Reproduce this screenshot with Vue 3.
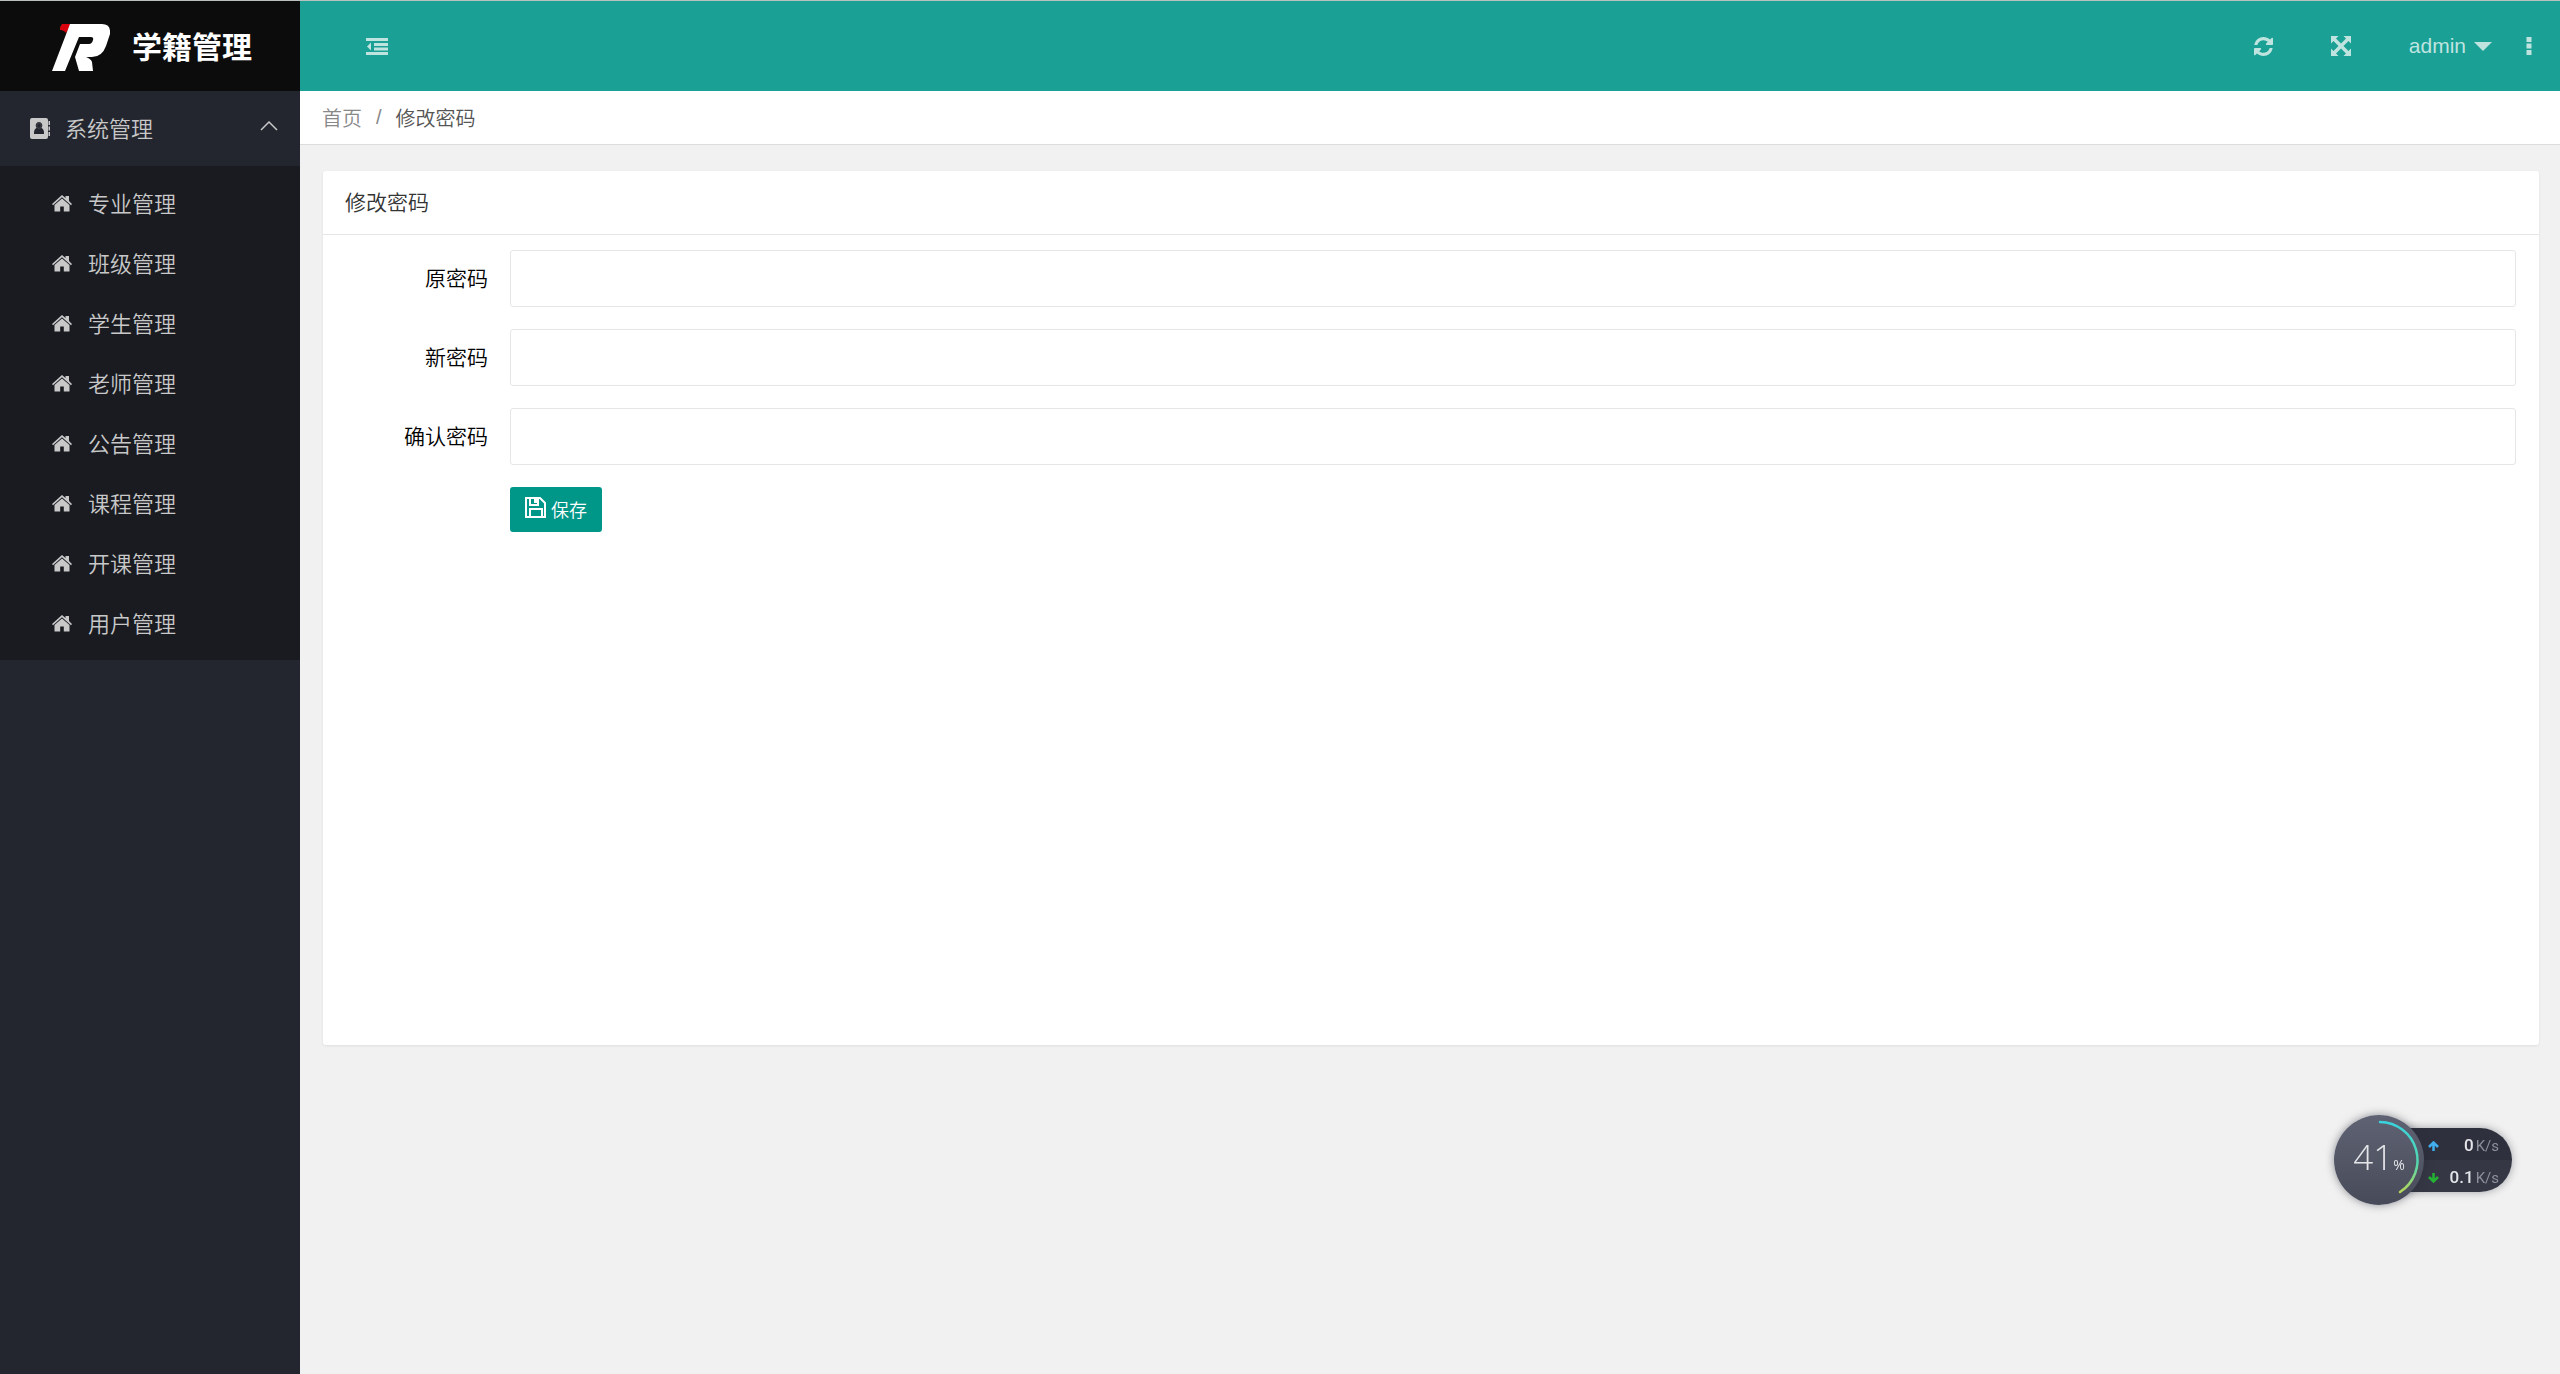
<script setup>
import { ref } from 'vue'

const menu = ['专业管理', '班级管理', '学生管理', '老师管理', '公告管理', '课程管理', '开课管理', '用户管理']
const fields = [
  { id: 'old-password', label: '原密码' },
  { id: 'new-password', label: '新密码' },
  { id: 'confirm-password', label: '确认密码' },
]
const form = ref({})
</script>

<template>
  <div class="layout">
    <aside class="sidebar">
      <div class="brand">
        <svg class="logo" width="58" height="48" viewBox="0 0 58 48" aria-hidden="true">
          <path fill="#d9000d" d="M10 0H19L14 9Q12 6 8 6Q8 2 10 0Z" />
          <path fill="#fff" fill-rule="evenodd" d="M18 0H50Q59 0 58 10L54 22Q50 33 40 33H34Q39 35 40 38L41 47H27L23 33L28 20H37Q40 20 41 16Q42 13 39 13H27L13 47H0Z" />
        </svg>
        <h1>学籍管理</h1>
      </div>
      <nav>
        <button class="group" type="button" aria-expanded="true">
          <svg width="20" height="21" viewBox="0 0 20 21" aria-hidden="true">
            <path fill="currentColor" fill-rule="evenodd" d="M2 0H16Q18 0 18 2V19Q18 21 16 21H2Q0 21 0 19V2Q0 0 2 0ZM9 4A3.300 3.600 0 0 0 6.500 10Q4 11 4 15V16H14V15Q14 11 11.500 10A3.300 3.600 0 0 0 9 4Z" />
            <path fill="none" stroke="currentColor" stroke-width="1.200" d="M9 5.200A2.200 2.600 0 0 1 9 10.400A2.200 2.600 0 0 1 9 5.200" opacity="0.150" />
            <path fill="currentColor" d="M18.500 3H20V7H18.500ZM18.500 8.500H20V12.500H18.500ZM18.500 14H20V18H18.500Z" />
          </svg>
          <span>系统管理</span>
          <svg class="chevron" width="18" height="10" viewBox="0 0 18 10" aria-hidden="true">
            <path d="M1 9L9 1L17 9" fill="none" stroke="currentColor" stroke-width="1.500" />
          </svg>
        </button>
        <ul class="submenu">
          <li v-for="item in menu" :key="item">
            <a href="#">
              <svg width="20" height="17" viewBox="0 0 20 17" aria-hidden="true">
                <path fill="currentColor" d="M10 0L13.500 3V1H17V6L20 9L19 10.200L10 2.300L1 10.200L0 9Z" />
                <path fill="currentColor" d="M10 3.500L17.500 10V16.500H11.800V11.500H8.200V16.500H2.500V10Z" />
              </svg>
              <span>{{ item }}</span>
            </a>
          </li>
        </ul>
      </nav>
    </aside>

    <div class="main">
      <header class="topbar">
        <button type="button" aria-label="收起菜单">
          <svg width="22" height="17" viewBox="0 0 22 17" aria-hidden="true">
            <path fill="currentColor" d="M0 0H22V3H0ZM8 5H22V8H8ZM8 9.500H22V12.500H8ZM0 14H22V17H0ZM5 4.500V12.500L1 8.500Z" />
          </svg>
        </button>
        <div class="tools">
          <button type="button" aria-label="刷新">
            <svg width="19" height="19" viewBox="0 0 1536 1536" aria-hidden="true">
              <path fill="currentColor" d="M1511 928q0 5-1 7-64 268-268 434.500T764 1536q-146 0-282.500-55T238 1324l-129 129q-19 19-45 19t-45-19-19-45V960q0-26 19-45t45-19h448q26 0 45 19t19 45-19 45l-137 137q71 66 161 102t187 36q134 0 250-65t186-179q11-17 53-117 8-23 30-23h192q13 0 22.500 9.500t9.500 22.500zm25-800v448q0 26-19 45t-45 19h-448q-26 0-45-19t-19-45 19-45l138-138Q969 256 768 256q-134 0-250 65T332 500q-11 17-53 117-8 23-30 23H50q-13 0-22.500-9.500T18 608v-7q65-268 270-434.500T768 0q146 0 284 55.500T1297 212l130-129q19-19 45-19t45 19 19 45z" />
            </svg>
          </button>
          <button type="button" aria-label="全屏">
            <svg width="20" height="20" viewBox="0 0 20 20" aria-hidden="true">
              <path fill="currentColor" d="M0 0H7.500L5 2.500L10 7.500L15 2.500L12.500 0H20V7.500L17.500 5L12.500 10L17.500 15L20 12.500V20H12.500L15 17.500L10 12.500L5 17.500L7.500 20H0V12.500L2.500 15L7.500 10L2.500 5L0 7.500Z" />
            </svg>
          </button>
          <button type="button" class="user">
            <span>admin</span>
            <svg width="18" height="9" viewBox="0 0 18 9" aria-hidden="true"><path fill="currentColor" d="M0 0H18L9 9Z" /></svg>
          </button>
          <button type="button" class="more" aria-label="更多">
            <svg width="6" height="18" viewBox="0 0 6 18" aria-hidden="true">
              <path fill="currentColor" d="M0.500 0H5.500V5H0.500ZM0.500 6.500H5.500V11.500H0.500ZM0.500 13H5.500V18H0.500Z" />
            </svg>
          </button>
        </div>
      </header>

      <nav class="breadcrumb" aria-label="位置">
        <a href="#">首页</a><span class="slash">/</span><span>修改密码</span>
      </nav>

      <main class="content">
        <section class="card">
          <h2>修改密码</h2>
          <form @submit.prevent>
            <div v-for="field in fields" :key="field.id" class="row">
              <label :for="field.id">{{ field.label }}</label>
              <input :id="field.id" v-model="form[field.id]" type="password" />
            </div>
            <button class="save" type="submit">
              <svg width="21" height="21" viewBox="0 0 21 21" aria-hidden="true">
                <path fill="none" stroke="currentColor" stroke-width="2" d="M1 1H15L20 6V20H1ZM5 20V12H17V20M5 1V8H13V1" />
                <path fill="currentColor" d="M9 2H12V6H9Z" />
              </svg>
              <span>保存</span>
            </button>
          </form>
        </section>
      </main>
    </div>

    <div class="monitor">
      <div class="gauge">
        <svg class="arc" width="90" height="90" viewBox="0 0 90 90" aria-hidden="true">
          <defs>
            <linearGradient id="arc" x1="0" y1="0" x2="0" y2="1">
              <stop offset="0" stop-color="#38d3dc" />
              <stop offset="0.600" stop-color="#55d6ac" />
              <stop offset="1" stop-color="#b5d65a" />
            </linearGradient>
          </defs>
          <path d="M46 7A38 38 0 0 1 66 77" fill="none" stroke="url(#arc)" stroke-width="2.500" stroke-linecap="round" />
        </svg>
        <span class="load">41</span><span class="percent">%</span>
      </div>
      <div class="speeds">
        <div class="speed">
          <svg class="up" width="11" height="10" viewBox="0 0 11 10" aria-hidden="true"><path d="M5.500 10V2M1 6L5.500 1.500L10 6" /></svg>
          <b>0</b><span>K/s</span>
        </div>
        <div class="speed">
          <svg class="down" width="11" height="10" viewBox="0 0 11 10" aria-hidden="true"><path d="M5.500 0V8M1 4L5.500 8.500L10 4" /></svg>
          <b>0.1</b><span>K/s</span>
        </div>
      </div>
    </div>
  </div>
</template>

<style>
body {
  background: #f1f1f1;
}
</style>

<style scoped>
.layout {
  display: flex;
  box-sizing: border-box;
  min-height: 100vh;
  border-top: 1px solid #b9c0c0;
  font-family: "Liberation Sans", "Noto Sans CJK SC", sans-serif;
  font-weight: 350;
}
button {
  padding: 0;
  border: 0;
  background: none;
  color: inherit;
  font: inherit;
  cursor: pointer;
}
a {
  color: inherit;
  text-decoration: none;
}
svg {
  flex: none;
  display: block;
}
.sidebar {
  flex: none;
  width: 300px;
  background: #23262e;
  color: #c8c8c9;
}
.brand {
  display: flex;
  align-items: center;
  gap: 22px;
  box-sizing: border-box;
  height: 90px;
  padding: 3px 0 0 52px;
  background: #0c0c0c;
}
.brand h1 {
  margin: 0;
  color: #fff;
  font-size: 30px;
  line-height: 44px;
  font-weight: 700;
}
.group {
  display: flex;
  align-items: center;
  width: 100%;
  height: 75px;
  padding: 0 22px 0 30px;
  font-size: 22px;
  gap: 15px;
}
.group span {
  padding-bottom: 4px;
}
.chevron {
  margin: 0 0 6px auto;
}
.submenu {
  margin: 0;
  padding: 7px 0;
  list-style: none;
  background: #191b20;
}
.submenu a {
  display: flex;
  align-items: center;
  gap: 16px;
  height: 60px;
  padding-left: 52px;
  font-size: 22px;
}
.submenu span {
  padding-bottom: 3px;
}
.main {
  flex: 1;
  min-width: 0;
}
.topbar {
  display: flex;
  align-items: center;
  justify-content: space-between;
  height: 90px;
  padding: 0 28px 0 66px;
  background: #1aa094;
  color: #bfe4e0;
}
.tools {
  display: flex;
  align-items: center;
  gap: 58px;
}
.user {
  display: flex;
  align-items: center;
  gap: 8px;
  font-size: 21px;
}
.more {
  margin-left: -24px;
}
.breadcrumb {
  display: flex;
  align-items: center;
  height: 53px;
  padding-left: 22px;
  border-bottom: 1px solid #dcdcdc;
  background: #fff;
  color: #555;
  font-size: 20px;
}
.breadcrumb a,
.slash {
  color: #888;
}
.slash {
  margin: 0 14px;
}
.content {
  padding: 26px 21px 24px 23px;
}
.card {
  min-height: 874px;
  border-radius: 3px;
  background: #fff;
  box-shadow: 0 1px 3px rgba(0, 0, 0, 0.08);
}
.card h2 {
  margin: 0;
  padding: 0 22px;
  border-bottom: 1px solid #e6e6e6;
  color: #333;
  font-size: 21px;
  line-height: 63px;
  font-weight: 350;
}
form {
  padding: 15px 23px 24px 0;
}
.row {
  display: flex;
  align-items: center;
  margin-bottom: 22px;
}
.row label {
  flex: none;
  width: 165px;
  margin-right: 22px;
  padding-bottom: 4px;
  color: #000;
  font-size: 21px;
  text-align: right;
}
.row input {
  flex: 1;
  min-width: 0;
  box-sizing: border-box;
  height: 57px;
  padding: 0 15px;
  border: 1px solid #e6e6e6;
  border-radius: 3px;
  background: #fff;
  font-size: 21px;
}
.save {
  display: flex;
  align-items: center;
  gap: 5px;
  height: 45px;
  margin-left: 187px;
  padding: 0 15px;
  border-radius: 3px;
  background: #009688;
  color: #fff;
  font-size: 18px;
}
.save svg {
  margin-bottom: 5px;
}
.save span {
  padding-bottom: 2px;
}
.monitor {
  position: fixed;
  right: 48px;
  bottom: 169px;
  display: flex;
  align-items: center;
  color: #e4e5e9;
}
.gauge {
  z-index: 1;
  display: flex;
  align-items: baseline;
  justify-content: center;
  box-sizing: border-box;
  width: 90px;
  height: 90px;
  border-radius: 50%;
  background: linear-gradient(#5e6272, #474b59);
  box-shadow: 0 0 8px rgba(40, 42, 55, 0.5);
  font-family: "Open Sans", sans-serif;
  font-weight: 300;
  line-height: 84px;
}
.arc {
  position: absolute;
  left: 0;
  top: 0;
}
.load {
  font-size: 35px;
}
.percent {
  font-size: 14px;
  font-weight: 400;
}
.speeds {
  display: flex;
  flex-direction: column;
  box-sizing: border-box;
  width: 133px;
  height: 64px;
  margin-left: -45px;
  padding: 0 13px 0 49px;
  border-radius: 0 32px 32px 0;
  background: linear-gradient(#2e313d 50%, #353844 50%);
  box-shadow: 0 0 8px rgba(40, 42, 55, 0.4);
}
.speed {
  display: flex;
  align-items: baseline;
  gap: 2px;
  line-height: 34px;
  height: 32px;
  font-family: Roboto, sans-serif;
  font-size: 17px;
}
.speed b {
  font-weight: 500;
}
.speed svg {
  margin-right: auto;
  fill: none;
  stroke-width: 2.5px;
}
.speed span {
  color: #8d909b;
  font-size: 15px;
  font-weight: 400;
}
.up {
  stroke: #42aef0;
}
.down {
  stroke: #25b234;
}
</style>
